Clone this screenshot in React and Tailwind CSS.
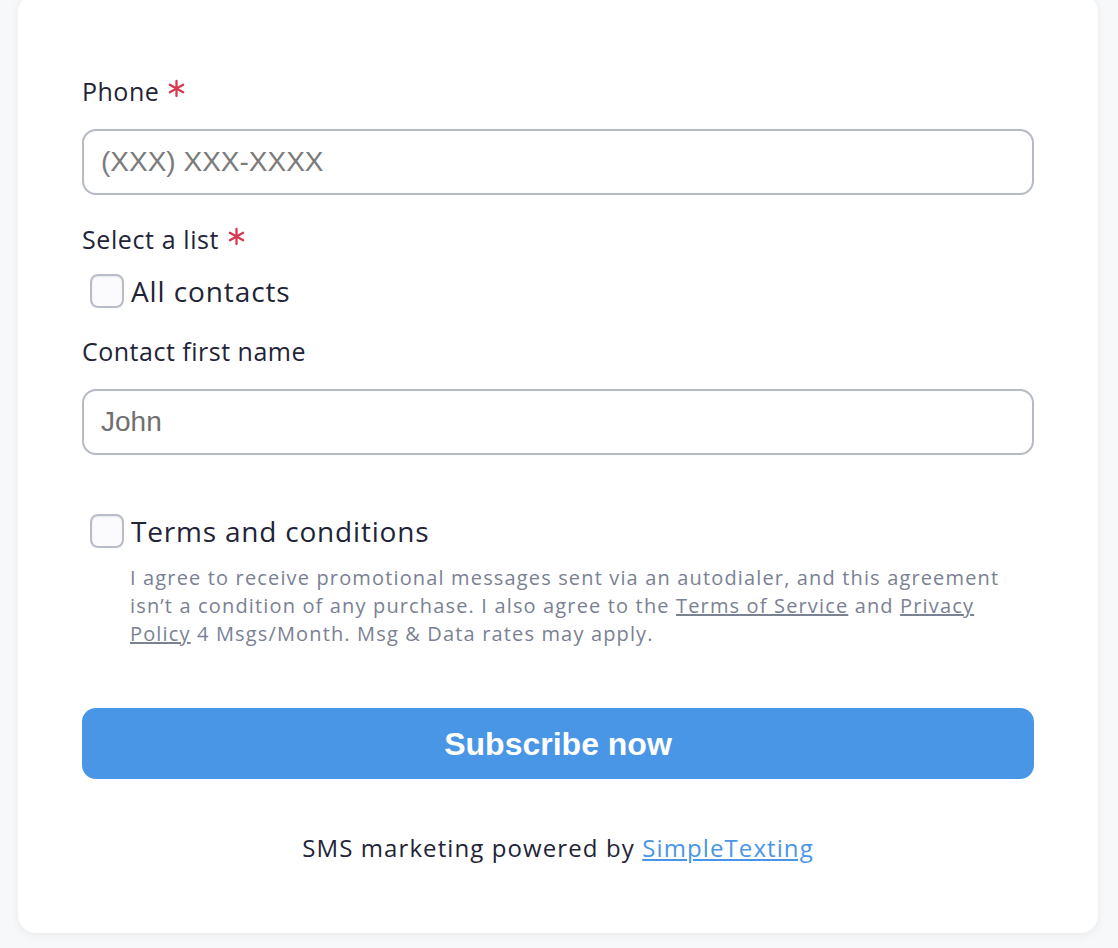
import React from "react";

const Asterisk = () => (
	<svg viewBox="0 0 20 20" className="w-[19px] h-[19px] inline-block ml-[8px] -mt-[5px]">
		<g stroke="#d6394f" strokeWidth="2.4" strokeLinecap="round">
			<line x1="10" y1="2" x2="10" y2="18" />
			<line x1="3" y1="6" x2="17" y2="14" />
			<line x1="17" y1="6" x2="3" y2="14" />
		</g>
	</svg>
);

const Box = () => (
	<span className="w-[34px] h-[34px] rounded-[8px] border-2 border-[#b7bcc8] bg-[#fbfbfd] shrink-0 shadow-[inset_0_1px_2px_rgba(0,0,0,0.08)]"></span>
);

const App = () => {
	return (
		<div className="min-h-[948px] overflow-hidden bg-[#f7f8fa] pl-[18px] pr-[20px] pb-[15px] font-['Open_Sans','Noto_Sans',sans-serif] text-[#1f2437]">
			<div className="-mt-[6px] bg-white rounded-[18px] shadow-[0_2px_10px_rgba(0,0,0,0.06)] px-[64px] pt-[80px] pb-[68px]">
				{/* Phone */}
				<label className="flex items-center text-[25px] tracking-[0.5px] leading-[34px] h-[34px]">
					Phone
					<Asterisk />
				</label>
				<input
					placeholder="(XXX) XXX-XXXX"
					className="mt-[21px] w-full h-[66px] rounded-[14px] border-2 border-[#b5bac5] px-[17px] text-[28px] font-['Liberation_Sans',Arial,sans-serif] placeholder:text-[#7b7b7b] outline-none"
				/>

				{/* Select a list */}
				<div className="mt-[27px] flex items-center text-[25px] tracking-[0.6px] leading-[34px] h-[34px]">
					Select a list
					<Asterisk />
				</div>
				<label className="mt-[18px] flex items-center gap-[7px] pl-[8px] h-[34px] text-[28px] tracking-[0.9px]">
					<Box />
					<span>All contacts</span>
				</label>

				{/* First name */}
				<div className="mt-[26px] text-[25px] tracking-[0.5px] leading-[34px] h-[34px]">
					Contact first name
				</div>
				<input
					placeholder="John"
					className="mt-[21px] w-full h-[66px] rounded-[14px] border-2 border-[#b5bac5] px-[17px] text-[28px] font-['Liberation_Sans',Arial,sans-serif] placeholder:text-[#6f6f6f] outline-none"
				/>

				{/* Terms */}
				<label className="mt-[59px] flex items-center gap-[7px] pl-[8px] h-[34px] text-[28px] tracking-[0.8px]">
					<Box />
					<span>Terms and conditions</span>
				</label>
				<p className="mt-[16px] pl-[48px] text-[20px] tracking-[1.15px] leading-[28px] text-[#7a8193] whitespace-nowrap">
					I agree to receive promotional messages sent via an autodialer, and
					this agreement
					<br />
					isn’t a condition of any purchase. I also agree to the{" "}
					<a className="underline">Terms of Service</a> and{" "}
					<a className="underline">Privacy</a>
					<br />
					<a className="underline">Policy</a> 4 Msgs/Month. Msg &amp; Data
					rates may apply.
				</p>

				<button className="mt-[60px] w-full h-[71px] rounded-[14px] bg-[#4a96e6] text-white text-[32px] font-bold font-['Liberation_Sans',Arial,sans-serif]">
					Subscribe now
				</button>

				<div className="mt-[52px] text-center text-[24px] tracking-[1.1px] leading-[34px]">
					SMS marketing powered by{" "}
					<a className="underline text-[#4a96e6]">SimpleTexting</a>
				</div>
			</div>
		</div>
	);
};

export default App;
